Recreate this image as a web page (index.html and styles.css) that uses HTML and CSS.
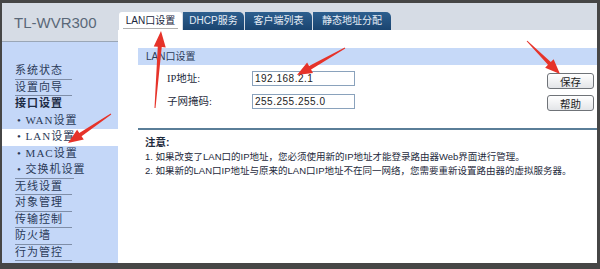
FILE: index.html
```html
<!DOCTYPE html>
<html lang="zh-CN">
<head>
  <meta charset="UTF-8">
  <title>TL-WVR300 LAN口设置</title>
  <link rel="stylesheet" href="styles.css">
</head>
<body>
  <div class="window">
    <!-- Left column: model name and menu -->
    <aside class="side">
      <div class="brand">TL-WVR300</div>
      <ul class="menu">
        <li><a class="line">系统状态</a></li>
        <li><a class="line">设置向导</a></li>
        <li class="group"><a>接口设置</a></li>
        <li class="sub"><a>• WAN设置</a></li>
        <li class="sub on"><a>• LAN设置</a></li>
        <li class="sub"><a>• MAC设置</a></li>
        <li class="sub"><a class="line">• 交换机设置</a></li>
        <li><a class="line">无线设置</a></li>
        <li><a class="line">对象管理</a></li>
        <li><a class="line">传输控制</a></li>
        <li><a class="line">防火墙</a></li>
        <li><a class="line">行为管控</a></li>
      </ul>
    </aside>

    <!-- Right column: tabs and settings panel -->
    <main class="main">
      <nav class="tabs">
        <div class="tab on" style="width: 63px"><span>LAN口设置</span></div>
        <div class="tab" style="width: 61px">DHCP服务</div>
        <div class="tab" style="width: 67px">客户端列表</div>
        <div class="tab" style="width: 78px">静态地址分配</div>
      </nav>

      <section class="panel">
        <div class="bar">LAN口设置</div>
        <div class="form">
          <div class="fields">
            <div class="row">
              <label>IP地址:</label>
              <input class="field" type="text" value="192.168.2.1">
            </div>
            <div class="row">
              <label>子网掩码:</label>
              <input class="field" type="text" value="255.255.255.0">
            </div>
          </div>
          <div class="buttons">
            <button class="btn">保存</button>
            <button class="btn">帮助</button>
          </div>
        </div>
        <div class="notes">
          <h4>注意:</h4>
          <p>1. 如果改变了LAN口的IP地址，您必须使用新的IP地址才能登录路由器Web界面进行管理。</p>
          <p>2. 如果新的LAN口IP地址与原来的LAN口IP地址不在同一网络，您需要重新设置路由器的虚拟服务器。</p>
        </div>
      </section>
    </main>
  </div>

  <!-- Red annotation arrows drawn over the screenshot -->
  <svg class="marks" width="600" height="269" viewBox="0 0 600 269">
    <polygon points="154.5,107.96 157.76,46.8 153.77,46.5 161,31 165.73,47.4 161.74,47.1 155.5,108.04"/>
    <polygon points="344.75,47.56 309.09,65.91 307.13,62.42 297,75 313.01,72.88 311.05,69.39 345.25,48.44"/>
    <polygon points="526.65,41.35 547.98,64.8 545.15,67.63 560,74 553.63,59.15 550.8,61.98 527.35,40.65"/>
    <polygon points="110.72,113.59 79.32,132.96 77.09,129.65 68,143 83.79,139.59 81.56,136.28 111.28,114.41"/>
  </svg>
</body>
</html>
```

FILE: styles.css
```css
body {
  margin: 0;
  width: 600px;
  height: 269px;
  background: #464646;
  position: relative;
  overflow: hidden;
  font-family: "Liberation Sans", "Noto Sans CJK SC", sans-serif;
  color: #1e2a3c;
}
.window {
  margin: 3px 3px 0 2px;
  height: 260px;
  display: flex;
  overflow: hidden;
}
/* Left column */
.side {
  width: 116px;
  background: #c4d7f8;
  display: flex;
  flex-direction: column;
}
.brand {
  height: 38px;
  background: #d6dce5;
  border-bottom: 1px solid #9aa6b6;
  padding-left: 12px;
  display: flex;
  align-items: center;
  font-size: 15px;
  color: #5a6878;
}
.menu {
  list-style: none;
  margin: 0;
  padding: 21px 0 0 0;
}
.menu li {
  height: 16.5px;
  padding-left: 13px;
}
.menu li a {
  display: block;
  width: 57px;
  height: 15.5px;
  line-height: 15px;
  border-bottom: 1px solid transparent;
  font-size: 11px;
  letter-spacing: 1px;
  color: #2a3a58;
  white-space: nowrap;
}
.menu li a.line {
  border-bottom-color: #7f8ea8;
}
.menu li.group a {
  font-weight: bold;
  color: #1d2b45;
}
.menu li.sub a {
  padding-left: 2px;
  font-family: "Liberation Serif", "Noto Sans CJK SC", serif;
}
.menu li.on {
  background: #fff;
}
/* Right column */
.main {
  flex: 1;
  display: flex;
  flex-direction: column;
  background: #fff;
}
.tabs {
  height: 27px;
  background: #d6dce5;
  display: flex;
  align-items: flex-end;
  gap: 1px;
  padding-left: 1px;
}
.tab {
  height: 18px;
  line-height: 18px;
  text-align: center;
  font-size: 10px;
  color: #e6edf6;
  background: linear-gradient(#2d5f8f, #1a4470);
  border-radius: 0 5px 0 0;
  white-space: nowrap;
}
.tab.on {
  background: #fff;
  color: #1a2740;
  border-radius: 3px 3px 0 0;
}
.tab.on span {
  border-bottom: 1px solid #b0b0b0;
  padding: 0 3px 2px;
}
.panel {
  padding: 18px 0 0 20px;
}
.bar {
  height: 17px;
  line-height: 17px;
  padding-left: 8px;
  background: #c6d9f8;
  font-size: 10px;
  color: #2c3c58;
}
.form {
  display: flex;
  margin-top: 6px;
}
.fields {
  flex: 1;
  padding-left: 29px;
}
.row {
  height: 23px;
  display: flex;
  align-items: flex-start;
}
.row label {
  width: 85px;
  font-size: 10.5px;
  line-height: 15px;
  font-family: "Liberation Serif", "Noto Sans CJK SC", serif;
}
.field {
  box-sizing: border-box;
  width: 103px;
  height: 15px;
  margin: 0;
  padding: 0 2px;
  border: 1px solid #8aa2bc;
  font-size: 10px;
  letter-spacing: 0.5px;
  font-family: "Liberation Sans", sans-serif;
  color: #222;
}
.buttons {
  display: flex;
  flex-direction: column;
  gap: 6px;
  margin: 2px 3px 0 0;
}
.btn {
  box-sizing: border-box;
  width: 47px;
  height: 16px;
  padding: 0;
  border: 1px solid #6f7378;
  border-radius: 3px;
  background: linear-gradient(#ffffff, #e3e5e8);
  font-size: 10.5px;
  font-family: "Noto Sans CJK SC", sans-serif;
  line-height: 13px;
  color: #1c1c1c;
}
.notes {
  margin-top: 11px;
  border-top: 2px solid #5a7e98;
  padding: 4px 0 0 7px;
}
.notes h4 {
  margin: 0;
  font-size: 10.5px;
  line-height: 16px;
}
.notes p {
  margin: 0;
  font-size: 9.5px;
  line-height: 14px;
  white-space: nowrap;
}
/* Annotation overlay */
.marks {
  position: absolute;
  top: 0;
  left: 0;
  pointer-events: none;
}
.marks polygon {
  fill: #e6332a;
}
```
